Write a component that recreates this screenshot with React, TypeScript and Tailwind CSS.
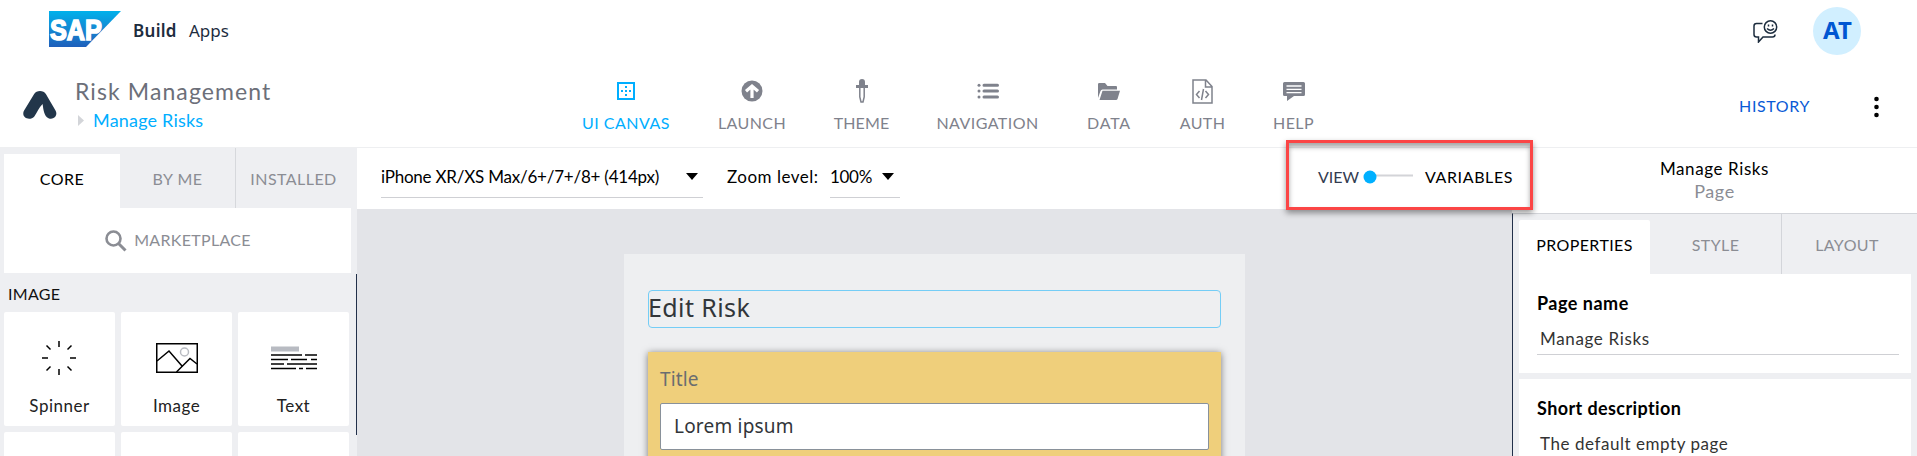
import type { ReactNode } from "react";

function SapLogo() {
  return (
    <svg width="72" height="36" viewBox="0 0 72 36" className="shrink-0">
      <defs>
        <linearGradient id="sap" x1="0" y1="0" x2="0" y2="1">
          <stop offset="0" stopColor="#00b1eb" />
          <stop offset="0.5" stopColor="#1588d2" />
          <stop offset="1" stopColor="#1e5fbb" />
        </linearGradient>
      </defs>
      <path d="M0 0H72L37 36H0Z" fill="url(#sap)" />
      <text
        x="1"
        y="28.500"
        textLength="52"
        lengthAdjust="spacingAndGlyphs"
        fontFamily="Liberation Sans, sans-serif"
        fontWeight="700"
        fontSize="29"
        fill="#fff"
        stroke="#fff"
        strokeWidth="1.600"
      >
        SAP
      </text>
    </svg>
  );
}

function AppLogo() {
  return (
    <svg width="34" height="30" viewBox="0 0 34 30" className="shrink-0">
      <path
        d="M11 4.200C13.500 -.2 20.500 -.2 23 4.200L32.500 20.500C35.500 26 30 30.500 25.500 28.200C21 26 20.500 20 19.600 14C15.500 18 14.500 22 11.500 26.200C7 31.500 -2 28 .8 21Z"
        fill="#22364a"
      />
    </svg>
  );
}

const navItems: { label: string; width: string; track: string; icon: ReactNode; active?: boolean }[] = [
  {
    label: "UI CANVAS",
    width: "w-[88px]",
    track: "tracking-[0.5px]",
    active: true,
    icon: (
      <svg width="18" height="18" viewBox="0 0 18 18">
        <path d="M1 1H17V17H1Z" fill="none" stroke="#00aeff" strokeWidth="2" />
        <path d="M8 4h2v2H8zM8 8h2v2H8zM8 12h2v2H8zM4 8h2v2H4zM12 8h2v2h-2z" fill="#00aeff" />
      </svg>
    ),
  },
  {
    label: "LAUNCH",
    width: "w-[68px]",
    track: "tracking-[0.4px]",
    icon: (
      <svg width="22" height="22" viewBox="0 0 22 22">
        <circle cx="11" cy="11" r="10.500" fill="#7f828c" />
        <path d="M11 18V7M5 11.200L11 6L17 11.200" fill="none" stroke="#fff" strokeWidth="3.200" />
      </svg>
    ),
  },
  {
    label: "THEME",
    width: "w-[55px]",
    track: "tracking-[0.1px]",
    icon: (
      <svg width="12" height="24" viewBox="0 0 12 24">
        <path d="M3 6V3Q3 0 6 0T9 3V6H12V9H0V6Z" fill="#7f828c" />
        <path d="M3.800 9V18L5 23H7L8.200 18V9" fill="none" stroke="#7f828c" strokeWidth="1.500" />
      </svg>
    ),
  },
  {
    label: "NAVIGATION",
    width: "w-[101px]",
    track: "tracking-[0.45px]",
    icon: (
      <svg width="22" height="16" viewBox="0 0 22 16" fill="#7f828c">
        <path d="M7 2.200H20.500M7 8H20.500M7 14H20.500" stroke="#7f828c" strokeWidth="3" strokeLinecap="round" />
        <circle cx="2" cy="2.200" r="1.500" />
        <circle cx="2" cy="8" r="1.500" />
        <circle cx="2" cy="14" r="1.500" />
      </svg>
    ),
  },
  {
    label: "DATA",
    width: "w-[46px]",
    track: "tracking-[0.8px]",
    icon: (
      <svg width="22" height="17" viewBox="0 0 22 17" fill="#7f828c">
        <path d="M0 15V1.200Q0 0 1.200 0H7L9.500 3H18Q19 3 19 4V6.500H4.500Q3 6.500 2.500 8Z" />
        <path d="M4.500 7.800H22L19.500 16Q19.200 17 18 17H1.500Z" />
      </svg>
    ),
  },
  {
    label: "AUTH",
    width: "w-[45px]",
    track: "tracking-[0.4px]",
    icon: (
      <svg width="21" height="25" viewBox="0 0 21 25" fill="none" stroke="#7f828c" strokeWidth="1.500">
        <path d="M1 1H14L20 7.500V24H1ZM13.500 1V8H20" />
        <path d="M7.500 12L4.500 15.500L7.500 19M13.500 12L16.500 15.500L13.500 19M11.500 10L9.500 21" />
      </svg>
    ),
  },
  {
    label: "HELP",
    width: "w-[41px]",
    track: "tracking-[0.4px]",
    icon: (
      <svg width="22" height="19" viewBox="0 0 22 19">
        <path d="M1.500 0H20.500Q22 0 22 1.500V12.500Q22 14 20.500 14H11L4 19V14H1.500Q0 14 0 12.500V1.500Q0 0 1.500 0Z" fill="#7f828c" />
        <path d="M3.500 4H18.500M3.500 7.300H18.500M3.500 10.600H18.500" stroke="#fff" strokeWidth="1.300" />
      </svg>
    ),
  },
];

function SpinnerIcon() {
  return (
    <svg width="36" height="36" viewBox="0 0 36 36" stroke="#000" strokeWidth="1.500" className="-ml-px">
      <path d="M18 1V7M18 29V35M1 18H7M29 18H35M5.500 5.500L9.500 9.500M26.500 26.500L30.500 30.500M5.500 30.500L9.500 26.500M26.500 9.500L30.500 5.500" />
    </svg>
  );
}

function ImageIcon() {
  return (
    <svg width="42" height="30" viewBox="0 0 42 30" fill="none" stroke="#000" strokeWidth="1.500">
      <rect x=".75" y=".75" width="40.500" height="28.500" />
      <path d="M1 18L13 8L26 23M20.500 29L34 15.500L41 21" />
      <circle cx="28.500" cy="9" r="4" stroke="#b9bcc2" />
    </svg>
  );
}

function TextIcon() {
  return (
    <svg width="46" height="24" viewBox="0 0 46 24">
      <rect width="28" height="5" y=".5" fill="#b8bbc2" />
      <path
        d="M0 9H31M34 9H46M0 13.500H17M20 13.500H36M40 13.500H46M0 18H13M16 18H46M0 22.500H25M28 22.500H32M35 22.500H46"
        stroke="#000"
        strokeWidth="1.500"
      />
    </svg>
  );
}

function Tile({ label, icon }: { label: string; icon: ReactNode }) {
  return (
    <div className="flex h-[114px] w-[111px] flex-col items-center rounded-[2px] bg-white">
      <div className="mt-[27px] flex h-[38px] items-center">{icon}</div>
      <div className="mt-[16px] text-[17px] leading-[26px] tracking-[0.5px] text-[#222]">{label}</div>
    </div>
  );
}

function Caret() {
  return (
    <svg width="12" height="7" viewBox="0 0 12 7">
      <path d="M0 0H12L6 7Z" fill="#000" />
    </svg>
  );
}

export default function App() {
  return (
    <div className="flex h-[456px] w-[1917px] flex-col overflow-hidden bg-white font-['Lato','Liberation_Sans',sans-serif] whitespace-nowrap">
      <header className="flex h-[62px] shrink-0 pl-[49px]">
        <div className="pt-[11px]">
          <SapLogo />
        </div>
        <div className="ml-[12px] w-[56px] pt-[18px] font-['Noto_Sans',sans-serif] text-[17px] leading-[26px] font-semibold tracking-[0.3px] text-[#1d2d3e]">
          Build
        </div>
        <div className="pt-[18px] font-['Noto_Sans',sans-serif] text-[17px] leading-[26px] text-[#1d2d3e]">Apps</div>
        <div className="ml-auto pt-[20px]">
          <svg width="25" height="23" viewBox="0 0 25 23" fill="none" stroke="#1d2d3e" strokeWidth="1.500">
            <path d="M9.500 3.500H3.500Q1 3.500 1 6V14.500Q1 17 3.500 17H5.500V22L10 17H19.500Q22 17 22 14.500" />
            <circle cx="17.500" cy="7" r="6.200" />
            <path d="M14 8.500Q17.500 12 21 8.500M15.500 4.500V6.500M19.500 4.500V6.500" />
          </svg>
        </div>
        <div className="mt-[7px] mr-[56px] ml-[35px] flex h-[48px] w-[48px] items-center justify-center rounded-full bg-[#d1efff] pb-[2px] pl-px font-['Noto_Sans',sans-serif] text-[24px] font-bold text-[#0057d2]">
          AT
        </div>
      </header>

      <section className="flex h-[86px] shrink-0 border-b border-[#eeeff1]">
        <div className="w-[75px] pt-[28px] pl-[23px]">
          <AppLogo />
        </div>
        <div className="w-[507px] pt-[13px]">
          <div className="text-[23px] leading-[32px] tracking-[1.1px] text-[#6c6f79]">Risk Management</div>
          <div className="flex items-center pl-[3px]">
            <svg width="6" height="11" viewBox="0 0 6 11">
              <path d="M0 0L6 5.500L0 11Z" fill="#d3d5d9" />
            </svg>
            <div className="ml-[9px] text-[18px] leading-[26px] tracking-[0.2px] text-[#00aeff]">Manage Risks</div>
          </div>
        </div>
        <nav className="flex gap-12">
          {navItems.map((n) => (
            <div key={n.label} className={`flex flex-col items-center ${n.width}`}>
              <div className="mt-[16px] flex h-[26px] items-center">{n.icon}</div>
              <div className={`mt-[8px] text-[16px] leading-[22px] ${n.track} ${n.active ? "text-[#00aeff]" : "text-[#7f828c]"}`}>{n.label}</div>
            </div>
          ))}
        </nav>
        <div className="mt-[32px] ml-auto text-[16px] leading-[24px] tracking-[0.6px] text-[#0a5ad6]">HISTORY</div>
        <div className="mt-[34px] mr-[38px] ml-[64px]">
          <svg width="5" height="22" viewBox="0 0 5 22">
            <circle cx="2.500" cy="3" r="2.300" />
            <circle cx="2.500" cy="11" r="2.300" />
            <circle cx="2.500" cy="19" r="2.300" />
          </svg>
        </div>
      </section>

      <main className="flex h-[308px]">
        <aside className="flex w-[357px] shrink-0 flex-col overflow-hidden bg-[#eeeff2]">
          <div className="flex h-[60px] shrink-0 pl-[4px] text-[16px] tracking-[0.45px] text-[#8b8d94]">
            <div className="mt-[6px] flex h-[54px] w-[116px] items-center justify-center bg-white pb-[4px] text-black">CORE</div>
            <div className="flex w-[115px] items-center justify-center pt-[2px]">BY ME</div>
            <div className="flex w-[116px] items-center justify-center border-l border-[#d6d8dc] pt-[2px]">INSTALLED</div>
          </div>
          <div className="ml-[4px] flex h-[65px] w-[347px] shrink-0 items-center justify-center gap-[7px] bg-white pl-px text-[16px] tracking-[0.3px] text-[#8b8d94]">
            <svg width="22" height="22" viewBox="0 0 22 22" fill="none" stroke="#8b8d94">
              <circle cx="8.500" cy="8.500" r="7" strokeWidth="2.600" />
              <path d="M13.500 13.500L20.500 20.500" strokeWidth="3" />
            </svg>
            <span className="pb-[2px]">MARKETPLACE</span>
          </div>
          <div className="flex h-[183px] shrink-0">
            <div className="w-[355px] pl-[4px]">
              <div className="h-[39px] pt-[9px] pl-[4px] text-[16px] leading-[24px] tracking-[0.3px] text-[#111]">IMAGE</div>
              <div className="grid grid-cols-[111px_111px_111px] gap-[6px]">
                <Tile label="Spinner" icon={<SpinnerIcon />} />
                <Tile label="Image" icon={<ImageIcon />} />
                <Tile label="Text" icon={<TextIcon />} />
                <Tile label="" icon={null} />
                <Tile label="" icon={null} />
                <Tile label="" icon={null} />
              </div>
            </div>
            <div className="mt-[1px] ml-[1px] h-[161px] w-px bg-[#22304a]" />
          </div>
        </aside>

        <div className="flex w-[1155px] shrink-0 flex-col">
          <div className="flex h-[61px] shrink-0 pl-[24px] text-[17px] text-black">
            <div className="mt-[12px] flex h-[38px] w-[322px] shrink-0 items-center border-b border-[#cfd0d4] pb-[4px]">
              <span className="tracking-[-0.22px]">iPhone XR/XS Max/6+/7+/8+ (414px)</span>
              <span className="mr-[5px] ml-auto flex">
                <Caret />
              </span>
            </div>
            <div className="mt-[17px] ml-[24px] w-[103px] shrink-0 leading-[24px] tracking-[0.5px]">Zoom level:</div>
            <div className="mt-[12px] flex h-[38px] w-[70px] shrink-0 items-center border-b border-[#cfd0d4] pb-[4px]">
              <span className="tracking-[-0.3px]">100%</span>
              <span className="mr-[6px] ml-auto flex">
                <Caret />
              </span>
            </div>
            <div className="relative z-10 mt-[-8px] ml-[386px] flex h-[70px] w-[247px] shrink-0 items-center border-[3px] border-[#fb4545] bg-transparent pl-[29px] text-[16px] shadow-[0_3px_6px_rgba(0,0,0,0.4),inset_0_4px_5px_rgba(0,0,0,0.35)]">
              <span className="w-[45px] pt-[4px] text-[#333b50]">VIEW</span>
              <svg width="50" height="14" viewBox="0 0 50 14" className="mt-[4px]">
                <path d="M8 5.500H50" stroke="#d3d4d8" strokeWidth="2" />
                <circle cx="7" cy="7" r="6.500" fill="#00b0ff" />
              </svg>
              <span className="ml-[12px] pt-[4px] tracking-[0.6px]">VARIABLES</span>
            </div>
          </div>
          <div className="flex h-[247px] overflow-hidden bg-[#e3e4e8] pl-[267px]">
            <div className="mt-[45px] w-[621px] bg-[#eeeff1] px-[24px] pt-[36px] font-['Noto_Sans',sans-serif]">
              <div className="flex h-[38px] w-[573px] items-center rounded-[4px] border border-[#74cdf6] pb-[2px] text-[25px] tracking-[0.4px] text-[#32363a]">
                <span className="-ml-px">Edit Risk</span>
              </div>
              <div className="mt-[24px] h-[130px] w-[573px] bg-[#efcf7b] px-[12px] pt-[14px] shadow-[0_1px_7px_rgba(0,0,0,0.5)]">
                <div className="h-[37px] text-[19px] leading-[26px] tracking-[0.1px] text-[#6a6d70]">Title</div>
                <div className="flex h-[47px] items-center rounded-[2px] border border-[#89919a] bg-white pl-[13px] text-[19px] tracking-[0.2px] text-[#32363a]">
                  Lorem ipsum
                </div>
              </div>
            </div>
          </div>
        </div>

        <aside className="flex w-[405px] shrink-0 flex-col">
          <div className="h-[65px] shrink-0 pt-[9px] text-center text-[17px] leading-[23px] tracking-[0.6px] text-black">
            <div>Manage Risks</div>
            <div className="text-[18px] text-[#8b8d94]">Page</div>
          </div>
          <div className="flex h-[243px] flex-col overflow-hidden border-t border-l border-t-[#d3d5da] border-l-[#22304a] bg-[#eeeff2] pl-[6px]">
            <div className="flex h-[60px] shrink-0 text-[16px] tracking-[0.4px] text-[#8b8d94]">
              <div className="mt-[6px] flex w-[131px] items-center justify-center rounded-t-[2px] bg-white pb-[5px] text-black">PROPERTIES</div>
              <div className="flex w-[131px] items-center justify-center pt-[1px]">STYLE</div>
              <div className="flex w-[131px] items-center justify-center border-l border-[#d3d5da] pt-[1px]">LAYOUT</div>
            </div>
            <div className="h-[99px] w-[392px] shrink-0 bg-white pt-[16px] pr-[12px] pl-[18px]">
              <div className="text-[18px] leading-[26px] font-bold tracking-[0.5px] text-black">Page name</div>
              <div className="mt-[10px] h-[29px] border-b border-[#cfd0d4] pl-[3px] text-[17px] leading-[26px] tracking-[0.65px] text-[#333]">
                Manage Risks
              </div>
            </div>
            <div className="mt-[6px] h-[99px] w-[392px] shrink-0 bg-white pt-[16px] pl-[18px]">
              <div className="text-[18px] leading-[26px] font-bold tracking-[0.4px] text-black">Short description</div>
              <div className="mt-[10px] pl-[3px] text-[17px] leading-[26px] tracking-[0.55px] text-[#333]">The default empty page</div>
            </div>
          </div>
        </aside>
      </main>
    </div>
  );
}
